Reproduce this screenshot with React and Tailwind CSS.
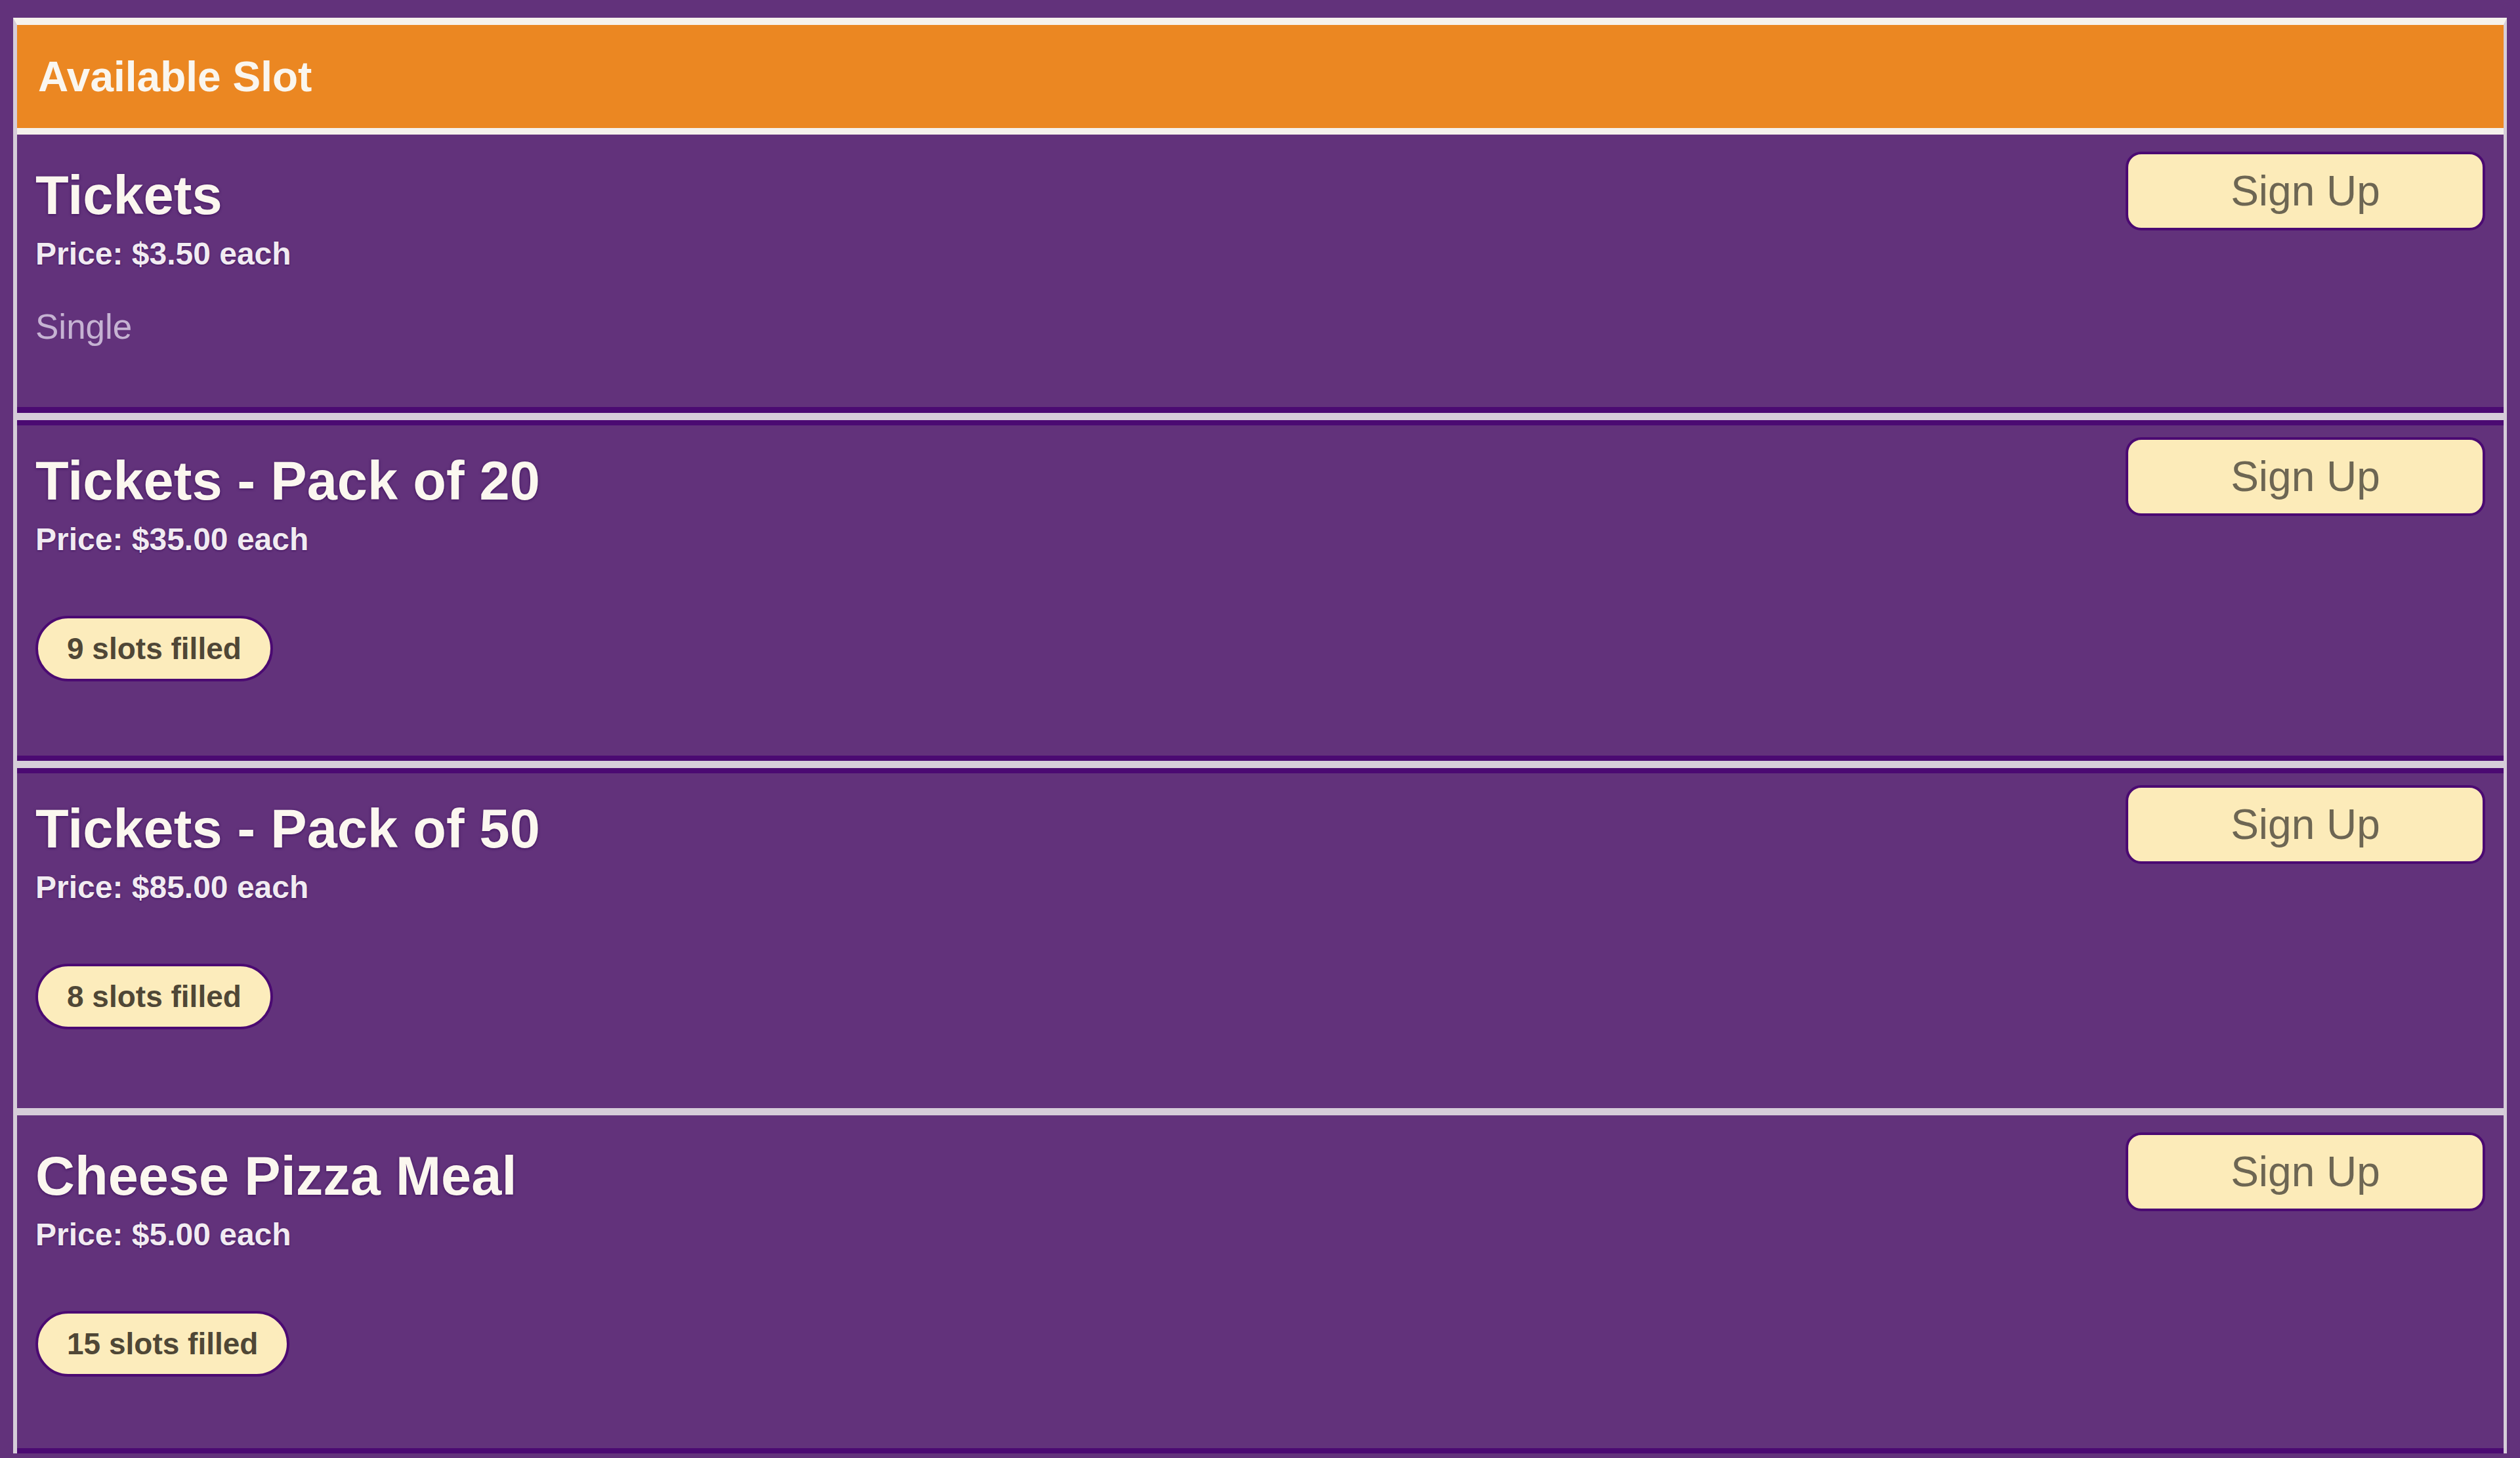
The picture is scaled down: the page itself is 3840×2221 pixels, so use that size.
import React from "react";

const rows = [
  {
    title: "Tickets",
    price: "Price: $3.50 each",
    note: "Single",
    h: "h-[424px]",
    borders: "border-t-[8px] border-b-[9px] border-t-[#62327b] border-b-[#4b0a72]",
  },
  {
    title: "Tickets - Pack of 20",
    price: "Price: $35.00 each",
    badge: "9 slots filled",
    h: "h-[519px]",
    borders: "border-t-[8px] border-b-[8px] border-t-[#4b0a72] border-b-[#4b0a72]",
  },
  {
    title: "Tickets - Pack of 50",
    price: "Price: $85.00 each",
    badge: "8 slots filled",
    h: "h-[518px]",
    borders: "border-t-[8px] border-b-[8px] border-t-[#4b0a72] border-b-[#62327b]",
  },
  {
    title: "Cheese Pizza Meal",
    price: "Price: $5.00 each",
    badge: "15 slots filled",
    h: "h-[515px]",
    borders: "border-t-[8px] border-b-[8px] border-t-[#62327b] border-b-[#4b0a72]",
  },
];

function Row({ r }) {
  return (
    <div className={`flex shrink-0 items-start justify-between bg-[#62327b] pl-[28px] pr-[28px] pt-[18px] ${r.h} ${r.borders}`}>
      <div className="mt-[25px] flex flex-col items-start">
        <div className="text-[83px] font-bold leading-none text-[#fbf7ef] [text-shadow:0_1px_4px_rgba(45,0,80,0.75)]">
          {r.title}
        </div>
        <div className="mt-[24px] text-[48px] font-bold leading-none text-[#f1ebf1] [text-shadow:0_1px_3px_rgba(45,0,80,0.7)]">
          {r.price}
        </div>
        {r.note && (
          <div className="mt-[60px] text-[53px] leading-none text-[#c6b3d3]">{r.note}</div>
        )}
        {r.badge && (
          <div className="mt-[92px] flex h-[100px] items-center rounded-full border-[4px] border-[#4b0a72] bg-[#fcecbc] px-[44px] text-[46px] font-bold leading-none text-[#4f4736]">
            {r.badge}
          </div>
        )}
      </div>
      <button className="flex h-[120px] w-[548px] items-center justify-center rounded-[24px] border-[4px] border-[#4b0a72] bg-[#fcebb9] text-[64px] leading-none text-[#6d6653]">
        Sign Up
      </button>
    </div>
  );
}

export default function App() {
  return (
    <div
      className="h-[2221px] w-full overflow-hidden bg-[#62327b] px-[20px] pt-[27px]"
      style={{ fontFamily: '"Liberation Sans", Arial, sans-serif' }}
    >
      <div className="flex flex-col gap-[11px] border-l-[6px] border-r-[5px] border-t-[11px] border-l-[#d6cdd9] border-r-[#d6cdd9] border-t-[#f6f2ec] bg-[#d6cdd9]">
        <div className="flex h-[167px] shrink-0 items-center border-b-[10px] border-[#f5f1ec] bg-[#eb8722] pl-[32px]">
          <span className="text-[64px] font-bold leading-none text-[#faf6ef]">Available Slot</span>
        </div>
        <div className="-mt-[11px] flex flex-col gap-[11px]">
          {rows.map((r) => (
            <Row key={r.title} r={r} />
          ))}
        </div>
      </div>
    </div>
  );
}
